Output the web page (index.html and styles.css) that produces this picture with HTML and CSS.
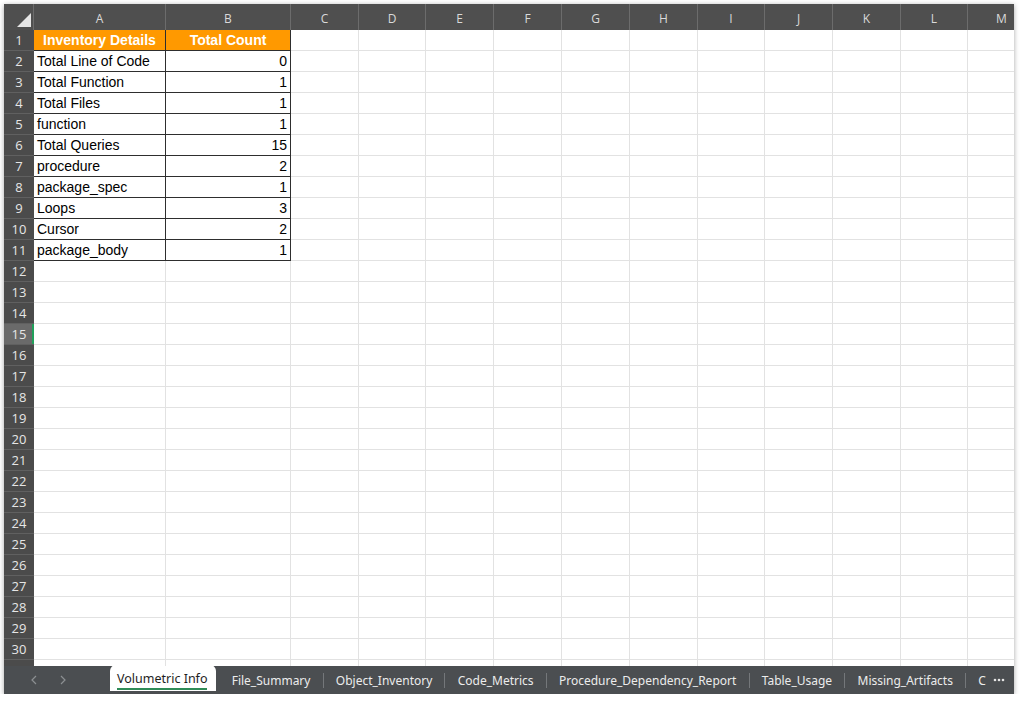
FILE: index.html
```html
<!DOCTYPE html>
<html lang="en">
<head>
    <meta charset="UTF-8">
    <title>Volumetric Info</title>
    <link rel="stylesheet" href="styles.css">
</head>
<body>
    <div class="window">
        <div class="sheet">
            <table class="grid">
                <colgroup>
                    <col class="w-rh"><col class="w-a"><col class="w-b">
                    <col class="w-68"><col class="w-67"><col class="w-68"><col class="w-68"><col class="w-68">
                    <col class="w-68"><col class="w-67"><col class="w-68"><col class="w-68"><col class="w-67"><col class="w-68">
                </colgroup>
                <thead>
                    <tr class="col-head">
                        <th class="corner"><svg width="14" height="14" viewBox="0 0 14 14"><polygon points="14,0 14,14 0,14" fill="#e6e6e6"/></svg></th>
                        <th>A</th><th>B</th><th>C</th><th>D</th><th>E</th><th>F</th><th>G</th><th>H</th><th>I</th><th>J</th><th>K</th><th>L</th><th>M</th>
                    </tr>
                </thead>
                <tbody>
                    <tr><th>1</th><td class="t hd">Inventory Details</td><td class="t hd">Total Count</td><td></td><td></td><td></td><td></td><td></td><td></td><td></td><td></td><td></td><td></td><td></td></tr>
                    <tr><th>2</th><td class="t">Total Line of Code</td><td class="t num">0</td><td></td><td></td><td></td><td></td><td></td><td></td><td></td><td></td><td></td><td></td><td></td></tr>
                    <tr><th>3</th><td class="t">Total Function</td><td class="t num">1</td><td></td><td></td><td></td><td></td><td></td><td></td><td></td><td></td><td></td><td></td><td></td></tr>
                    <tr><th>4</th><td class="t">Total Files</td><td class="t num">1</td><td></td><td></td><td></td><td></td><td></td><td></td><td></td><td></td><td></td><td></td><td></td></tr>
                    <tr><th>5</th><td class="t">function</td><td class="t num">1</td><td></td><td></td><td></td><td></td><td></td><td></td><td></td><td></td><td></td><td></td><td></td></tr>
                    <tr><th>6</th><td class="t">Total Queries</td><td class="t num">15</td><td></td><td></td><td></td><td></td><td></td><td></td><td></td><td></td><td></td><td></td><td></td></tr>
                    <tr><th>7</th><td class="t">procedure</td><td class="t num">2</td><td></td><td></td><td></td><td></td><td></td><td></td><td></td><td></td><td></td><td></td><td></td></tr>
                    <tr><th>8</th><td class="t">package_spec</td><td class="t num">1</td><td></td><td></td><td></td><td></td><td></td><td></td><td></td><td></td><td></td><td></td><td></td></tr>
                    <tr><th>9</th><td class="t">Loops</td><td class="t num">3</td><td></td><td></td><td></td><td></td><td></td><td></td><td></td><td></td><td></td><td></td><td></td></tr>
                    <tr><th>10</th><td class="t">Cursor</td><td class="t num">2</td><td></td><td></td><td></td><td></td><td></td><td></td><td></td><td></td><td></td><td></td><td></td></tr>
                    <tr><th>11</th><td class="t">package_body</td><td class="t num">1</td><td></td><td></td><td></td><td></td><td></td><td></td><td></td><td></td><td></td><td></td><td></td></tr>
                    <tr><th>12</th><td></td><td></td><td></td><td></td><td></td><td></td><td></td><td></td><td></td><td></td><td></td><td></td><td></td></tr>
                    <tr><th>13</th><td></td><td></td><td></td><td></td><td></td><td></td><td></td><td></td><td></td><td></td><td></td><td></td><td></td></tr>
                    <tr><th>14</th><td></td><td></td><td></td><td></td><td></td><td></td><td></td><td></td><td></td><td></td><td></td><td></td><td></td></tr>
                    <tr><th class="sel">15</th><td></td><td></td><td></td><td></td><td></td><td></td><td></td><td></td><td></td><td></td><td></td><td></td><td></td></tr>
                    <tr><th>16</th><td></td><td></td><td></td><td></td><td></td><td></td><td></td><td></td><td></td><td></td><td></td><td></td><td></td></tr>
                    <tr><th>17</th><td></td><td></td><td></td><td></td><td></td><td></td><td></td><td></td><td></td><td></td><td></td><td></td><td></td></tr>
                    <tr><th>18</th><td></td><td></td><td></td><td></td><td></td><td></td><td></td><td></td><td></td><td></td><td></td><td></td><td></td></tr>
                    <tr><th>19</th><td></td><td></td><td></td><td></td><td></td><td></td><td></td><td></td><td></td><td></td><td></td><td></td><td></td></tr>
                    <tr><th>20</th><td></td><td></td><td></td><td></td><td></td><td></td><td></td><td></td><td></td><td></td><td></td><td></td><td></td></tr>
                    <tr><th>21</th><td></td><td></td><td></td><td></td><td></td><td></td><td></td><td></td><td></td><td></td><td></td><td></td><td></td></tr>
                    <tr><th>22</th><td></td><td></td><td></td><td></td><td></td><td></td><td></td><td></td><td></td><td></td><td></td><td></td><td></td></tr>
                    <tr><th>23</th><td></td><td></td><td></td><td></td><td></td><td></td><td></td><td></td><td></td><td></td><td></td><td></td><td></td></tr>
                    <tr><th>24</th><td></td><td></td><td></td><td></td><td></td><td></td><td></td><td></td><td></td><td></td><td></td><td></td><td></td></tr>
                    <tr><th>25</th><td></td><td></td><td></td><td></td><td></td><td></td><td></td><td></td><td></td><td></td><td></td><td></td><td></td></tr>
                    <tr><th>26</th><td></td><td></td><td></td><td></td><td></td><td></td><td></td><td></td><td></td><td></td><td></td><td></td><td></td></tr>
                    <tr><th>27</th><td></td><td></td><td></td><td></td><td></td><td></td><td></td><td></td><td></td><td></td><td></td><td></td><td></td></tr>
                    <tr><th>28</th><td></td><td></td><td></td><td></td><td></td><td></td><td></td><td></td><td></td><td></td><td></td><td></td><td></td></tr>
                    <tr><th>29</th><td></td><td></td><td></td><td></td><td></td><td></td><td></td><td></td><td></td><td></td><td></td><td></td><td></td></tr>
                    <tr><th>30</th><td></td><td></td><td></td><td></td><td></td><td></td><td></td><td></td><td></td><td></td><td></td><td></td><td></td></tr>
                    <tr><th></th><td></td><td></td><td></td><td></td><td></td><td></td><td></td><td></td><td></td><td></td><td></td><td></td><td></td></tr>
                </tbody>
            </table>
        </div>
        <div class="tabbar">
            <div class="nav">
                <svg width="6" height="10" viewBox="0 0 6 10"><polyline points="5,1 1,5 5,9" fill="none" stroke="#8c8f92" stroke-width="1.2"/></svg>
                <svg width="6" height="10" viewBox="0 0 6 10"><polyline points="1,1 5,5 1,9" fill="none" stroke="#8c8f92" stroke-width="1.2"/></svg>
            </div>
            <div class="tab active"><span>Volumetric Info</span></div>
            <div class="tab">File_Summary</div>
            <div class="sep"></div>
            <div class="tab">Object_Inventory</div>
            <div class="sep"></div>
            <div class="tab">Code_Metrics</div>
            <div class="sep"></div>
            <div class="tab">Procedure_Dependency_Report</div>
            <div class="sep"></div>
            <div class="tab">Table_Usage</div>
            <div class="sep"></div>
            <div class="tab">Missing_Artifacts</div>
            <div class="sep"></div>
            <div class="tab last">C</div>
            <svg class="more" width="12" height="4" viewBox="0 0 12 4"><circle cx="2" cy="2" r="1.3" fill="#e6e6e6"/><circle cx="6" cy="2" r="1.3" fill="#e6e6e6"/><circle cx="10" cy="2" r="1.3" fill="#e6e6e6"/></svg>
        </div>
    </div>
</body>
</html>
```

FILE: styles.css
```css
body {
    margin: 0;
    background-color: #fff;
    font-family: "Liberation Sans", Arial, sans-serif;
}
.window {
    width: 1010px;
    margin: 4px 0 0 4px;
    background-color: #fff;
    box-shadow: 0 1px 5px rgba(0, 0, 0, 0.35);
}
.sheet {
    height: 662px;
    overflow: hidden;
}

/* grid */
.grid {
    border-collapse: separate;
    border-spacing: 0;
    table-layout: fixed;
    width: 1032px;
}
.w-rh { width: 30px; }
.w-a { width: 132px; }
.w-b { width: 125px; }
.w-68 { width: 68px; }
.w-67 { width: 67px; }
.grid th,
.grid td {
    padding: 0;
    box-sizing: border-box;
}
.col-head th {
    height: 26px;
    background-color: #4f4f4f;
    color: #dadada;
    font-family: "Open Sans", sans-serif;
    font-size: 12px;
    font-weight: normal;
    border-right: 1px solid #6c6c6c;
    padding-top: 2px;
}
.col-head th.corner {
    border-right: 1px solid #6c6c6c;
    text-align: right;
    vertical-align: bottom;
    padding: 0 2px 3px 0;
}
.corner svg {
    display: block;
    margin-left: auto;
}
.grid tbody th {
    background-color: #4b4b4b;
    color: #e6e6e6;
    font-family: "Open Sans", sans-serif;
    font-size: 13px;
    font-weight: normal;
    text-align: center;
    border-bottom: 1px solid #606060;
}
.grid tbody th.sel {
    background-color: #6a6a6a;
    box-shadow: inset -2px 0 #21a05a;
}
.grid td {
    height: 21px;
    border-right: 1px solid #e2e2e2;
    border-bottom: 1px solid #e2e2e2;
    font-size: 14px;
    color: #000;
    padding: 0 3px;
    white-space: nowrap;
    overflow: hidden;
}
.grid td.t {
    border-right-color: #2e2e2e;
    border-bottom-color: #2e2e2e;
}
.grid td.num {
    text-align: right;
}
.grid td.hd {
    background-color: #ff9900;
    color: #fff;
    font-weight: bold;
    text-align: center;
}

/* sheet tabs */
.tabbar {
    height: 28px;
    background-color: #4b4e51;
    display: flex;
    align-items: center;
    font-family: "Noto Sans", sans-serif;
    font-size: 12px;
    color: #ececec;
    white-space: nowrap;
    overflow: hidden;
}
.nav {
    width: 106px;
    display: flex;
    gap: 23px;
    padding-left: 27px;
    box-sizing: border-box;
}
.nav svg {
    display: block;
}
.tab {
    padding: 0 12.2px;
}
.tab.active {
    align-self: stretch;
    display: flex;
    align-items: center;
    padding: 0 9px 0 7px;
    margin-top: -1px;
    margin-bottom: 3px;
    margin-right: 3px;
    background-color: #fff;
    color: #1e1e1e;
    font-size: 12.5px;
    border-radius: 6px 6px 0 0;
}
.tab.active span {
    border-bottom: 2px solid #2e8b57;
    padding: 3px 0 1px;
}
.sep {
    width: 1px;
    height: 15px;
    background-color: #74777a;
}
.tab.last {
    padding-right: 7px;
}
.more {
    display: block;
}
```
